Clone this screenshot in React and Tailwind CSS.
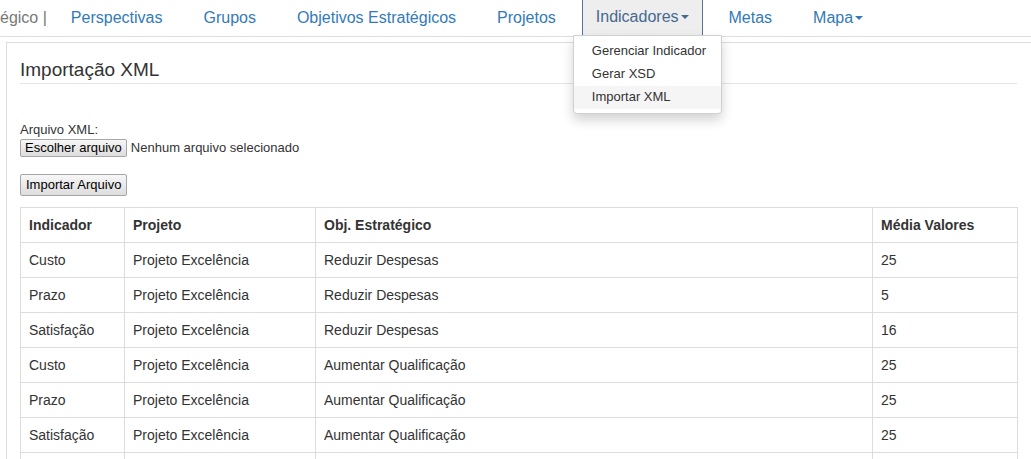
import React from 'react';

const rows = [
  ['Custo', 'Projeto Excelência', 'Reduzir Despesas', '25'],
  ['Prazo', 'Projeto Excelência', 'Reduzir Despesas', '5'],
  ['Satisfação', 'Projeto Excelência', 'Reduzir Despesas', '16'],
  ['Custo', 'Projeto Excelência', 'Aumentar Qualificação', '25'],
  ['Prazo', 'Projeto Excelência', 'Aumentar Qualificação', '25'],
  ['Satisfação', 'Projeto Excelência', 'Aumentar Qualificação', '25'],
  ['Custo', 'Projeto Excelência', 'Aumentar Qualificação', '25'],
];

const Caret = () => (
  <span className="inline-block ml-[2px] align-middle w-0 h-0 border-t-[4px] border-t-current border-x-[4px] border-x-transparent" />
);

const NavItem = ({ children, caret }) => (
  <li className="px-[15px] h-[36px] flex items-center text-[#337ab7]">
    {children}
    {caret && <Caret />}
  </li>
);

const Navbar = () => {
  return (
    <nav className="h-[37px] bg-white border-b border-[#dedede] flex items-center">
      <span className="text-[#777] text-[16px] pr-[9px] whitespace-nowrap">égico |</span>
      <ul className="flex items-center gap-[11px] text-[16px] -mt-[1px]">
        <NavItem>Perspectivas</NavItem>
        <NavItem>Grupos</NavItem>
        <NavItem>Objetivos Estratégicos</NavItem>
        <NavItem>Projetos</NavItem>
        <li className="relative px-[13px] h-[36px] flex items-center bg-[#eeeeee] border-x border-b border-[#53749c] text-[#46698f]">
          Indicadores
          <Caret />
          <div className="absolute left-[-10px] top-[35px] w-[149px] bg-white border border-[#d0d0d0] rounded-b-[4px] shadow-[0_6px_12px_rgba(0,0,0,0.175)] py-[4px] text-[13px] text-[#333] z-10">
            <div className="h-[23px] flex items-center px-[18px] whitespace-nowrap">Gerenciar Indicador</div>
            <div className="h-[23px] flex items-center px-[18px]">Gerar XSD</div>
            <div className="h-[23px] flex items-center px-[18px] bg-[#f5f5f5]">Importar XML</div>
          </div>
        </li>
        <NavItem>Metas</NavItem>
        <NavItem caret>Mapa</NavItem>
      </ul>
    </nav>
  );
};

const Button = ({ children, className = '' }) => (
  <button className={`border border-[#a6a6a6] rounded-[2px] bg-gradient-to-b from-[#f7f7f7] to-[#dddddd] text-[13px] text-black px-[4px] leading-[15px] whitespace-nowrap ${className}`}>
    {children}
  </button>
);

export default function App() {
  return (
    <div className="w-[1031px] h-[459px] overflow-hidden bg-white text-[#333] font-['Liberation_Sans',Arial,sans-serif]">
      <Navbar />
      <div className="ml-[6px] mt-[5px] border-t border-l border-[#dddddd] pl-[13px] pr-[14px]">
        <h2 className="pt-[13px] text-[19px] leading-[27px] font-normal border-b border-[#e5e5e5]">Importação XML</h2>

        <div className="pt-[38px] text-[13px]">
          <div className="leading-[15px]">Arquivo XML:</div>
          <div className="flex items-center gap-[4px] mt-[1px]">
            <Button className="h-[18px]">Escolher arquivo</Button>
            <span>Nenhum arquivo selecionado</span>
          </div>
          <Button className="mt-[16px] h-[22px] px-[5px]">Importar Arquivo</Button>
        </div>

        <table className="mt-[11px] w-[997px] border-collapse text-[14px] table-fixed">
          <thead>
            <tr>
              <th className="w-[104px] border border-[#dddddd] text-left font-bold px-[8px] h-[35px] leading-[18px]">Indicador</th>
              <th className="w-[191px] border border-[#dddddd] text-left font-bold px-[8px] h-[35px] leading-[18px]">Projeto</th>
              <th className="w-[557px] border border-[#dddddd] text-left font-bold px-[8px] h-[35px] leading-[18px]">Obj. Estratégico</th>
              <th className="w-[145px] border border-[#dddddd] text-left font-bold px-[8px] h-[35px] leading-[18px]">Média Valores</th>
            </tr>
          </thead>
          <tbody>
            {rows.map((r, i) => (
              <tr key={i}>
                {r.map((c, j) => (
                  <td key={j} className="border border-[#dddddd] px-[8px] h-[35px] leading-[18px]">{c}</td>
                ))}
              </tr>
            ))}
          </tbody>
        </table>
      </div>
    </div>
  );
}
